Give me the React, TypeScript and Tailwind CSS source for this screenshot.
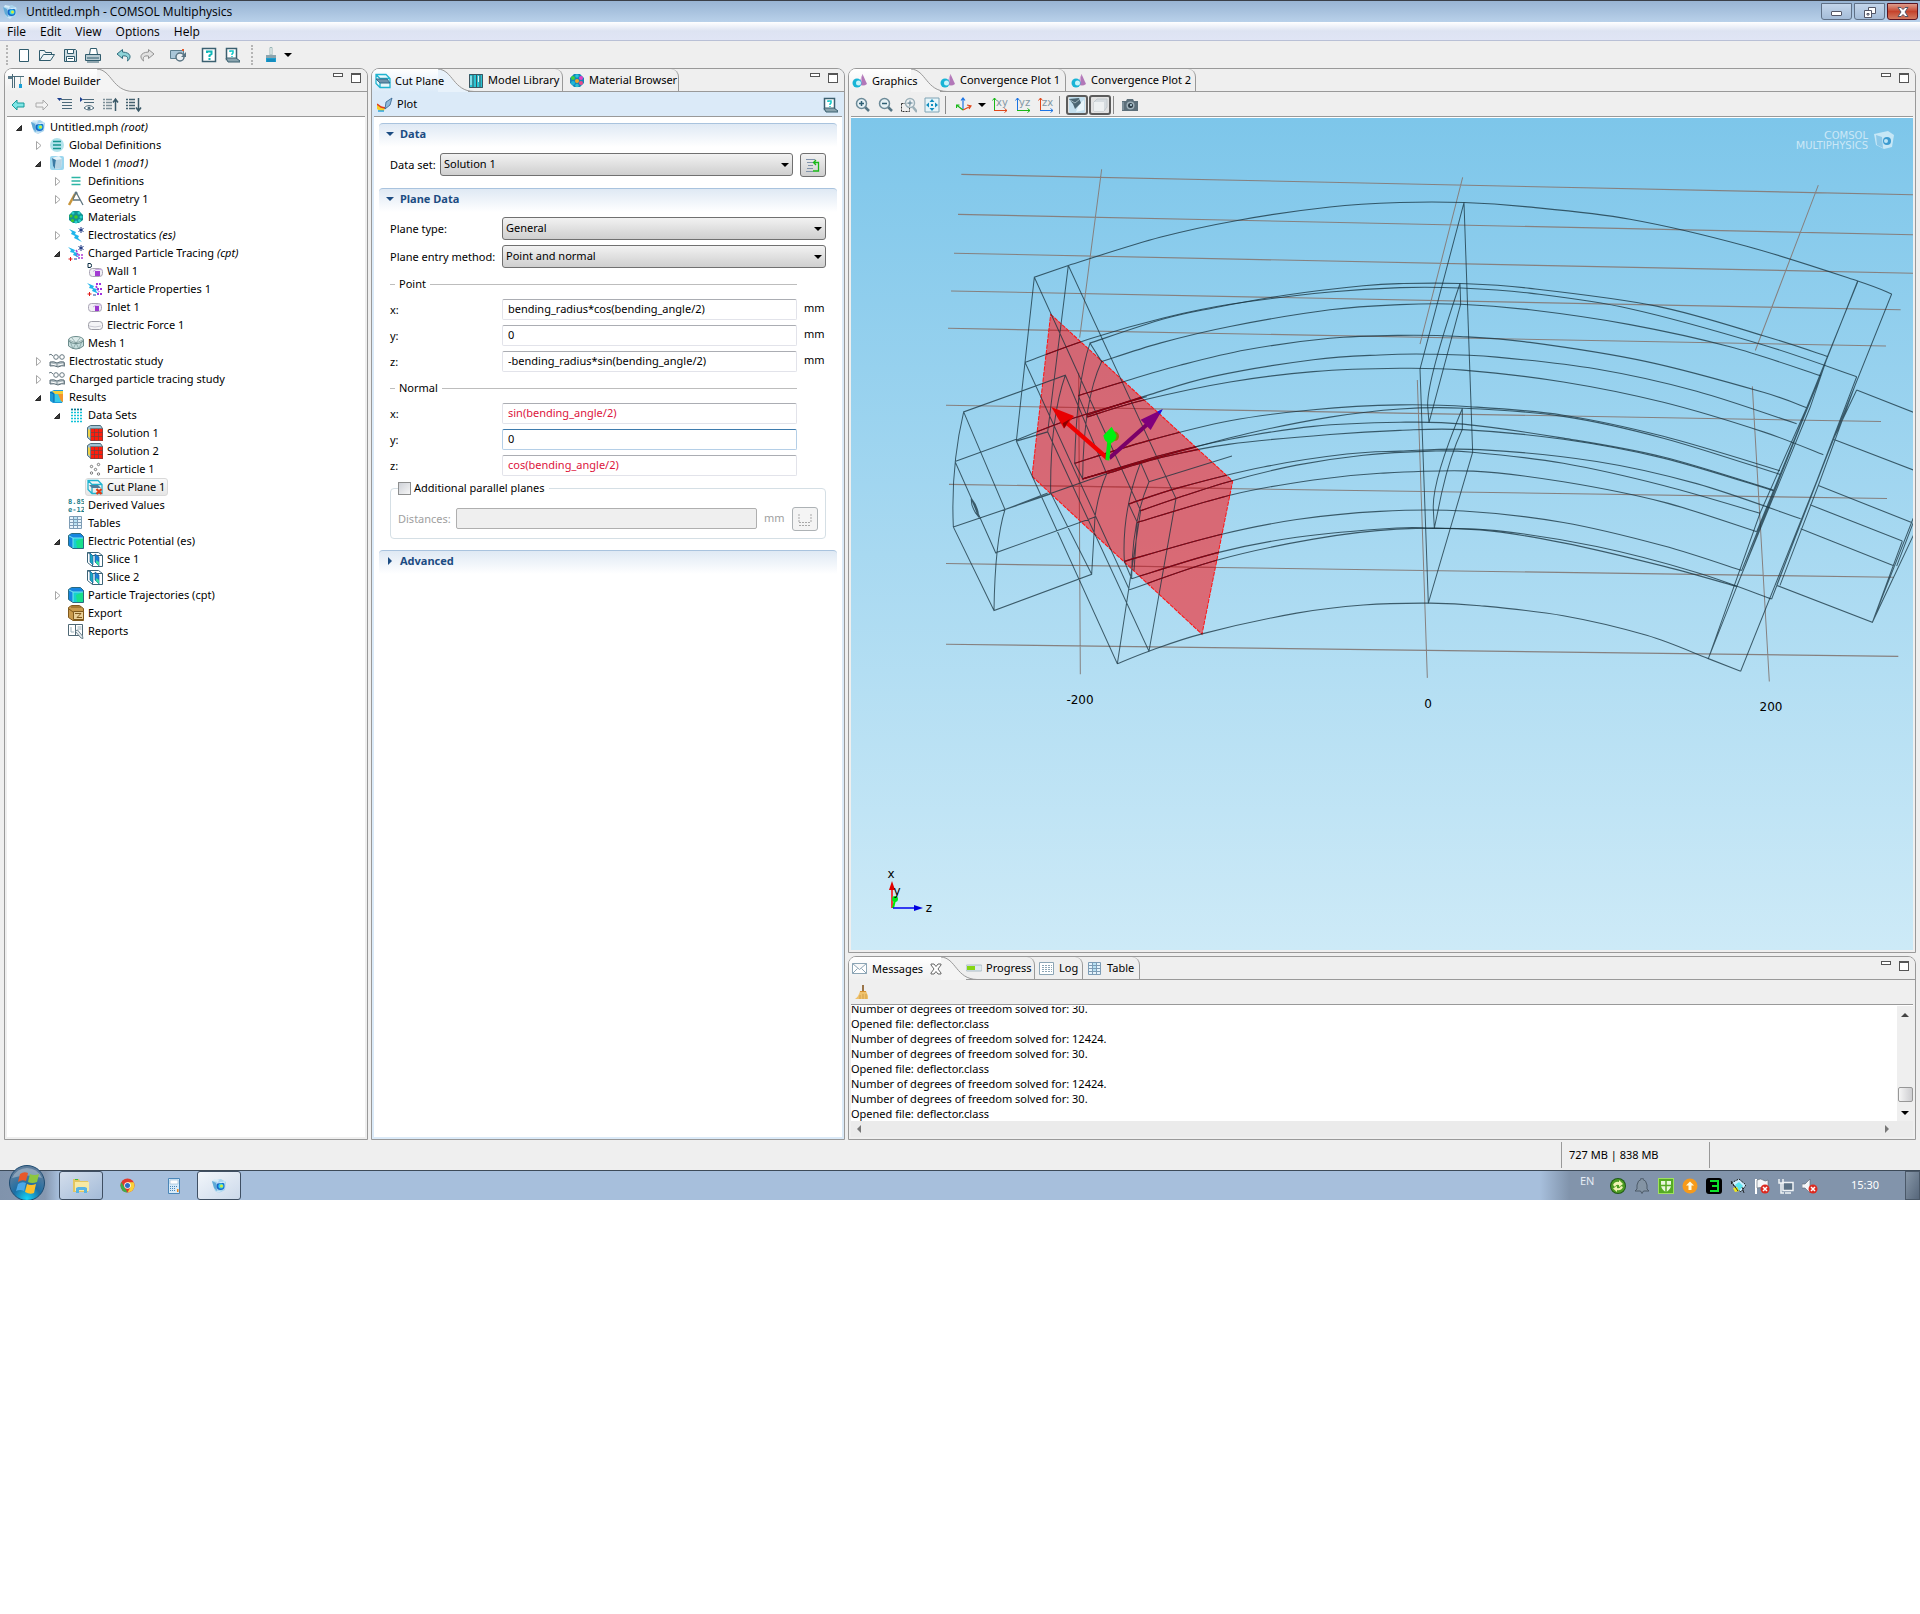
import type { ReactNode } from "react"

const UI_FONT = "font-['Noto_Sans','Open_Sans',sans-serif]"

type IconName = keyof typeof ICONS

// 16x16 icon drawings, keyed by what they stand for
const ICONS = {
    app: (
        <>
            <path d="M1 3l9-2 5 3-1 8-6 3-4-2z" fill="#a9d4ee" />
            <path d="M1 3l4 2 1 8-3-3z" fill="#5fa9d6" />
            <path d="M3 1l5 1-1 2-5-1z" fill="#d5ebf8" />
            <path d="M5 13l3 2 2-2z" fill="#cfe6f4" />
            <circle cx="9.500" cy="8" r="4" fill="#1565c8" />
            <circle cx="10" cy="8" r="2.600" fill="#35d3e8" />
            <circle cx="10.500" cy="8" r="1.500" fill="#d8ea3a" />
            <path d="M6 5l8-1" stroke="#dff3ff" />
        </>
    ),
    newFile: <path d="M3.500 2.500h9v12h-9z" fill="#fff" stroke="#2f5b6c" />,
    open: <path d="M.5 13.500V3.500h5l1 2h6v2.500m-12 5.500l4-6h11l-4 6z" fill="#eef3f5" stroke="#2f5b6c" />,
    save: (
        <>
            <path d="M2.500 2.500h11l1 1v11h-12z" fill="#cfdde2" stroke="#2f5b6c" />
            <path d="M5.500 2.500h6v4h-6zM4.500 9.500h8v5h-8z" fill="#fff" stroke="#2f5b6c" />
            <path d="M6 11.500h5" stroke="#2f5b6c" />
        </>
    ),
    print: (
        <>
            <path d="M4.500 7.500l1-6h6l1 6z" fill="#fff" stroke="#2f5b6c" />
            <path d="M.5 7.500h15v6h-15z" fill="#b9cbd2" stroke="#2f5b6c" />
            <path d="M2 11h12M2 15h12" stroke="#2f5b6c" />
        </>
    ),
    undo: <path d="M6.500 2.500L1 7l5.500 4.500V9c4-.5 6 .5 5 5 4-3 4-8.500-5-9z" fill="#8fd4d8" stroke="#2f6c7c" />,
    redo: <path d="M9.500 2.500L15 7l-5.500 4.500V9c-4-.5-6 .5-5 5-4-3-4-8.500 5-9z" fill="#e2e2e2" stroke="#929292" />,
    refresh: (
        <>
            <path d="M.5 3.500h13v8H.5z" fill="#a9c6d8" stroke="#5d7f90" />
            <circle cx="10" cy="10" r="4" fill="#e9eef1" stroke="#597483" strokeWidth="1.500" />
            <path d="M11 10h5V5z" fill="#597483" />
            <path d="M12 2h2v2h-2z" fill="#e4572a" />
        </>
    ),
    help: (
        <>
            <path d="M1.500 1.500h13v13h-13z" fill="#fff" stroke="#3b6070" strokeWidth="1.500" />
            <path d="M6 6V4.500h4.500V7L8.500 8.500V10m0 1v2" fill="none" stroke="#10b8b8" strokeWidth="2" />
        </>
    ),
    docs: (
        <>
            <path d="M2.500 1.500h10v11h-10z" fill="#fff" stroke="#3b6070" strokeWidth="1.500" />
            <path d="M2 11h10l4 3v1H4z" fill="#8aa4ae" stroke="#3b6070" />
            <path d="M6 5V4h3v2L8 7v1m0 1v1" fill="none" stroke="#10c8c8" strokeWidth="1.500" />
        </>
    ),
    brush: (
        <>
            <path d="M7 .5h2V8H7z" fill="#fff" stroke="#8aa" strokeWidth=".8" />
            <path d="M3 8h10v3H3z" fill="#8ca5ae" />
            <path d="M3 11h10v4H3z" fill="#1d9fd0" />
            <path d="M5 12v3m2-3v3m2-3v3m2-3v3" stroke="#0b6fa0" strokeWidth=".7" />
        </>
    ),
    builder: (
        <>
            <path d="M0 3.500h16M4.500 1v14M6.500 3v12" stroke="#4b6b7a" />
            <path d="M12.500 4v8" stroke="#8aa" />
            <path d="M11 11h3v4h-3z" fill="#19a0d8" />
            <path d="M0 3h4v3H0z" fill="#5a7a8a" />
        </>
    ),
    back: <path d="M1 8l5-5v3h7v4H6v3z" fill="#7fe6e6" stroke="#159a9a" />,
    forward: <path d="M14 8L9 3v3H2v4h7v3z" fill="#f2f2f2" stroke="#a9a9a9" />,
    collapse: (
        <>
            <path d="M0 1h5L2.500 4z" fill="#1b3f8f" />
            <path d="M4 2.500h11M5 5.500h10M5 8.500h10M5 11.500h10" stroke="#4d6a7a" />
        </>
    ),
    show: (
        <>
            <path d="M0 0l3 2.500L0 5z" fill="#1b3f8f" />
            <path d="M3 2.500h11M4 5.500h10" stroke="#4d6a7a" />
            <path d="M4 11q5-5 10 0q-5 4-10 0z" fill="#fff" stroke="#4d6a7a" />
            <circle cx="9" cy="11" r="1.500" fill="#4d6a7a" />
        </>
    ),
    moveUp: (
        <>
            <path d="M0 2.500h9M0 5.500h9M0 8.500h9M0 11.500h9" stroke="#7d8f98" strokeWidth="1.500" strokeDasharray="2 1 7 0" />
            <path d="M12.500 14V3M10 5.500L12.500 2 15 5.500" fill="none" stroke="#3c5a68" strokeWidth="1.500" />
        </>
    ),
    moveDown: (
        <>
            <path d="M0 2.500h9M0 5.500h9M0 8.500h9M0 11.500h9" stroke="#44606e" strokeWidth="1.500" strokeDasharray="2 1 7 0" />
            <path d="M12.500 1v12M10 10.500l2.500 3.500 2.500-3.500" fill="none" stroke="#3c5a68" strokeWidth="1.500" />
        </>
    ),
    globalDefs: (
        <>
            <circle cx="8" cy="8" r="7" fill="#b3e3ec" />
            <path d="M4 4.500h8M4 8h8M4 11.500h8" stroke="#16958f" strokeWidth="1.500" />
        </>
    ),
    model: (
        <>
            <rect x="1" y="1" width="14" height="14" rx="2" fill="#9bd6ee" />
            <path d="M3 3l7-2 3 3-1 9-6 1-2-3z" fill="#e8f4fa" />
            <path d="M3 3l4 2-1 9-2-3z" fill="#3a7ba5" />
            <path d="M7 5l6-1-1 9-6 1z" fill="#b5d3e3" />
        </>
    ),
    defs: <path d="M3.500 4.500h9M3.500 8h9M3.500 11.500h9" stroke="#2cb5a5" strokeWidth="1.500" />,
    geometry: (
        <>
            <path d="M7 3L1 14" stroke="#c8963c" strokeWidth="2.500" />
            <path d="M8 1l7 13M8 1L5 8M5 9h7" fill="none" stroke="#5f7680" strokeWidth="1.300" />
            <circle cx="8" cy="2" r="1.500" fill="#5f7680" />
        </>
    ),
    materials: (
        <>
            <path d="M5 2h6l4 4v5l-4 3H5l-4-3V6z" fill="#0f9292" />
            <g fill="#2ad0c8">
                <circle cx="5" cy="4" r="1.500" />
                <circle cx="11" cy="4" r="1.500" />
                <circle cx="13" cy="8" r="1.500" />
                <circle cx="8" cy="13" r="1.500" />
                <circle cx="11.500" cy="11.500" r="1.500" />
            </g>
            <g fill="#43c928">
                <circle cx="3" cy="7" r="1.500" />
                <circle cx="8" cy="8" r="1.800" />
                <circle cx="4.500" cy="11.500" r="1.500" />
            </g>
        </>
    ),
    electrostatics: (
        <>
            <path d="M1 2l7 3-1 2 4 2-1 2 4 4-8-4 1-2-4-2 1-2z" fill="#1fb6ec" />
            <path d="M13 0v6M10.500 1.500l5 3m0-3l-5 3" stroke="#14307e" />
        </>
    ),
    cpt: (
        <>
            <path d="M0 2l7 3-1 2 4 1-1 2 3 3-7-3 1-2-4-1 1-2z" fill="#1fb6ec" />
            <path d="M13 0v6M10.500 1.500l5 3m0-3l-5 3" stroke="#14307e" />
            <path d="M8 5q3 5 0 6m2-1h5m-5 3h5" stroke="#b13bd6" strokeWidth="1.600" fill="none" strokeDasharray="2 1" />
            <path d="M2.500 12v4M.5 14h4" stroke="#e01818" />
            <path d="M6 14h3" stroke="#1444a0" />
        </>
    ),
    wall: (
        <>
            <rect x="2.500" y="5.500" width="13" height="8" rx="3" fill="#f0eef4" stroke="#a9a4b4" />
            <path d="M8 8h5v5H8z" fill="#a23bd2" />
            <path d="M6 8.500l3-2h6" stroke="#c9a8e4" fill="none" />
            <path d="M1 .5h2q1.500 0 1.500 2t-1.500 2H1z" fill="none" stroke="#0c2f44" />
        </>
    ),
    particleProps: (
        <>
            <path d="M0 2l7 3-1 2 4 1-1 2 3 3-7-3 1-2-4-1 1-2z" fill="#1fb6ec" />
            <path d="M9 3h5m-5 2l3 6m-2-3h5m-5 5h5" stroke="#a133e0" strokeWidth="1.800" fill="none" strokeDasharray="2 1" />
            <path d="M2.500 11v4M.5 13h4" stroke="#e01818" />
            <path d="M6 14h3" stroke="#1444a0" />
        </>
    ),
    inlet: (
        <>
            <rect x="1.500" y="4.500" width="13" height="8" rx="3" fill="#f0eef4" stroke="#a9a4b4" />
            <path d="M8 7h4v5H8z" fill="#9a35cf" />
            <path d="M6 8l3-2h5" stroke="#c9a8e4" fill="none" />
        </>
    ),
    force: (
        <>
            <rect x="1.500" y="4.500" width="14" height="8" rx="3" fill="#f4f4f6" stroke="#9d9da6" />
            <path d="M2 9q6 2 12 0" stroke="#c9c9d2" fill="none" />
        </>
    ),
    mesh: (
        <>
            <path d="M.5 5v6q7.500 6 15 0V5z" fill="#c5dddd" stroke="#6c8c8c" />
            <ellipse cx="8" cy="5" rx="7.500" ry="3.500" fill="#dcebea" stroke="#6c8c8c" />
            <path d="M2 6l3 8 3-6 3 6 3-8M1 5l7 3 7-3M4 3l4 5 4-5" fill="none" stroke="#6c8c8c" strokeWidth=".6" />
        </>
    ),
    study: (
        <>
            <path d="M0 2q2-2 4 1" fill="none" stroke="#66777f" />
            <circle cx="7" cy="4" r="2.300" fill="#fff" stroke="#66777f" />
            <circle cx="13" cy="4" r="2.300" fill="#fff" stroke="#66777f" />
            <path d="M1 9q4-1 7 1 3-2 7-1l1 4q-3-1-7 1-4-2-8-1z" fill="#aab7bc" stroke="#5e6f78" />
            <path d="M2 11l5 1m2 0l5-1" stroke="#fff" />
        </>
    ),
    results: (
        <>
            <path d="M1 3l4-2h9v11l-1 2H4l-3-2z" fill="#1c9ad8" />
            <path d="M5 5h9v8H5z" fill="#38c9e8" />
            <path d="M9 5h5v8l-2-1z" fill="#f3952a" />
            <path d="M3 2h11v3H6z" fill="#f2cf3c" />
            <path d="M1 3l4 2v8" stroke="#0f62a8" fill="none" />
        </>
    ),
    dataSets: (
        <>
            <path d="M3 2.500h11M3 5.500h11M3 8.500h11M3 11.500h11M3 14.500h11" stroke="#12c3d8" strokeWidth="1.500" strokeDasharray="2 1" />
            <path d="M3 2.500h11" stroke="#13768e" strokeWidth="1.500" strokeDasharray="2 1" />
        </>
    ),
    solution: (
        <>
            <path d="M.5 2.500l3-2h10l2 3v12H4l-3.500-3z" fill="#9fc4d4" stroke="#4b6b7a" />
            <path d="M1 4l2 1v8l-2-2z" fill="#f0d248" />
            <path d="M4 4h12v12H4z" fill="#ff1c0c" />
            <path d="M3.500 3.500h12v12h-12zM7.500 4v12M11.500 4v12M4 7.500h12M4 11.500h12" stroke="#5a4a48" strokeWidth=".6" fill="none" />
        </>
    ),
    particle: (
        <g fill="none" stroke="#777">
            <circle cx="4.500" cy="5.500" r="1.200" />
            <circle cx="11.500" cy="3.500" r="1.200" />
            <circle cx="8.500" cy="8.500" r="1.200" />
            <circle cx="4.500" cy="12" r="1.200" />
            <circle cx="11.500" cy="13" r="1.200" />
        </g>
    ),
    cutPlaneBad: (
        <>
            <path d="M1 1.500h10l4 4v9H5l-4-4zM1 1.500l4 4h10M5 5.500v9" fill="none" stroke="#20b4d0" strokeWidth="1.300" />
            <path d="M2 6h9l3 3H5z" fill="#4b7f9e" />
            <path d="M9.500 10l5 5m0-5l-5 5" stroke="#e43a12" strokeWidth="2.200" />
        </>
    ),
    cutPlane: (
        <>
            <path d="M1 1.500h10l4 4v9H5l-4-4zM1 1.500l4 4h10M5 5.500v9" fill="#e5f7fb" stroke="#20b4d0" strokeWidth="1.300" />
            <path d="M1 6h11l3 4H5z" fill="#6f93ab" stroke="#2f6c8c" />
        </>
    ),
    derived: (
        <g fontFamily="DejaVu Sans Mono, monospace" fontSize="7" fontWeight="bold" fill="#1c808c">
            <text x="0" y="7">8.85</text>
            <text x="0" y="15">e-12</text>
        </g>
    ),
    tables: (
        <>
            <path d="M1.500 1.500h12v12h-12z" fill="#e6f3fb" stroke="#7d9cb5" />
            <path d="M6 2h4v8H6z" fill="#b8e2f4" />
            <path d="M1.500 4.500h12M1.500 7.500h12M1.500 10.500h12M5.500 1.500v12M9.500 1.500v12" stroke="#7d9cb5" />
        </>
    ),
    plotGroup: (
        <>
            <path d="M.5 2.500l3-2h9l3 3v12H5l-4.500-3z" fill="#1686e0" stroke="#2a6a80" />
            <path d="M5 5h10v10H5z" fill="#19d0d0" />
            <path d="M8 8l7-3v10H9z" fill="#18e08c" />
            <path d="M1 3l4 2h10M5 5v10" fill="none" stroke="#75e6f0" />
        </>
    ),
    slice: (
        <>
            <path d="M.5 1.500h11l4 3v11h-10l-5-4zM.5 1.500l5 3h10M5.500 4.500v11" fill="#fff" stroke="#3c6478" />
            <path d="M3 2l3 3v9l-3-3z" fill="#1aa8c4" stroke="#17669c" strokeWidth=".7" />
            <path d="M8 3l4 3v9l-4-4z" fill="#1a7fd8" stroke="#17669c" strokeWidth=".7" />
            <path d="M9 9l3 2v4l-3-3z" fill="#35e0a0" />
        </>
    ),
    exporter: (
        <>
            <path d="M.5 2.500l3-2h8l4 3v12H5l-4.500-3z" fill="#c99a4c" stroke="#80591c" />
            <path d="M5.500 6.500h10v8h-10z" fill="#e9cf98" stroke="#80591c" />
            <path d="M7 8.500h6l-4 4h5M1 4l4 3M3 2h10" fill="none" stroke="#80591c" />
        </>
    ),
    reports: (
        <>
            <path d="M.5 1.500h14v11H.5z" fill="#fff" stroke="#4f6875" />
            <path d="M7.500 1v12" stroke="#4f6875" />
            <path d="M9.500 4h4M9.500 6h4M3 4v5h3" stroke="#9bb0ba" fill="none" />
            <path d="M7 8l6 7 2 .5-.5-2.500-5-6z" fill="#e8eef1" stroke="#4f6875" strokeWidth=".8" />
        </>
    ),
    library: (
        <>
            <path d="M1 1h14v14H1z" fill="#2ac5d4" />
            <path d="M1.500 1.500h13v13h-13zM5 1v14M8.500 1v14M12 1v14" fill="none" stroke="#3c5560" />
            <path d="M3 3v9M10.500 3v6" stroke="#d8f7fa" />
        </>
    ),
    browser: (
        <>
            <path d="M5 1h6l4 4v5l-4 4H5l-4-4V5z" fill="#1586b8" />
            <circle cx="4" cy="5" r="2" fill="#3fd03a" />
            <circle cx="8" cy="3" r="1.800" fill="#22c7d8" />
            <circle cx="12" cy="5" r="2" fill="#e33fc4" />
            <circle cx="8" cy="8" r="2" fill="#f2a628" />
            <circle cx="4" cy="10" r="2" fill="#1fb8d8" />
            <circle cx="12" cy="10" r="2" fill="#e84c8a" />
            <circle cx="8" cy="12.500" r="1.800" fill="#2fc0d0" />
        </>
    ),
    plot: (
        <>
            <path d="M0 7l4 3 4 1-1 3H3l-3-2z" fill="#f6d02c" />
            <path d="M0 7l4 3 4 1" stroke="#e23d1c" strokeWidth="1.500" fill="none" />
            <path d="M1 14h6" stroke="#2aa6e0" strokeWidth="1.500" />
            <path d="M8 12l1-7 6-4-2 7z" fill="#8fbadb" stroke="#2f5f8c" strokeWidth=".8" />
        </>
    ),
    select: (
        <>
            <path d="M1 2.500h9M2 5.500h6M3 8.500h5M2 11.500h6M1 14.500h7" stroke="#8093ab" />
            <path d="M9 5.500h4.500v8.500H8M11 3L8.500 5.500 11 8" fill="none" stroke="#18b818" strokeWidth="1.300" />
        </>
    ),
    range: <path d="M2 3v9m12-9v9M2 11.500h12M2 14.500h12" stroke="#a9a9a9" strokeDasharray="2 1" fill="none" />,
    graphics: (
        <>
            <path d="M10.500 1l4.500 10q-4 3-8 0z" fill="#b277b8" />
            <path d="M10.500 1L9 12l-1.500-1z" fill="#dcb8e0" />
            <circle cx="5" cy="10" r="4.500" fill="#18b4d6" />
            <circle cx="6.500" cy="10" r="2.500" fill="#c8f3fa" />
        </>
    ),
    zoomIn: (
        <>
            <path d="M10 10l4 4" stroke="#557584" strokeWidth="2.500" />
            <circle cx="6.500" cy="6.500" r="5" fill="#e6f1f5" stroke="#6d8b99" strokeWidth="1.500" />
            <path d="M4 6.500h5M6.500 4v5" stroke="#2f5f74" strokeWidth="1.500" />
        </>
    ),
    zoomOut: (
        <>
            <path d="M10 10l4 4" stroke="#557584" strokeWidth="2.500" />
            <circle cx="6.500" cy="6.500" r="5" fill="#e6f1f5" stroke="#6d8b99" strokeWidth="1.500" />
            <path d="M4 6.500h5" stroke="#2f5f74" strokeWidth="1.500" />
        </>
    ),
    zoomBox: (
        <>
            <path d="M.5 6.500h8v8h-8z" fill="none" stroke="#333" strokeDasharray="2 1" />
            <path d="M12 10l4 5" stroke="#9db0b8" strokeWidth="2.500" />
            <circle cx="9" cy="6" r="4.500" fill="#eef4f6" fillOpacity=".7" stroke="#9db0b8" strokeWidth="1.500" />
            <path d="M6.500 6h5M9 3.500v5" stroke="#5d7f90" />
        </>
    ),
    extents: (
        <>
            <path d="M1 1h14v14H1z" fill="#e6f5fa" stroke="#7fa3b4" />
            <path d="M8 2l2.500 3h-5zM8 14l2.500-3h-5zM2 8l3-2.500v5zM14 8l-3-2.500v5zM7 7h2v2H7z" fill="#128fc0" />
        </>
    ),
    axes: (
        <>
            <path d="M7 13V1M5 3.500L7 1l2 2.500" stroke="#1b74e4" strokeWidth="1.200" fill="none" />
            <path d="M7 13L.5 8m0 3V8h3" stroke="#18b818" strokeWidth="1.200" fill="none" />
            <path d="M7 13l8-4m-4-1l4 1-2 3" stroke="#e0481c" strokeWidth="1.200" fill="none" />
        </>
    ),
    envelope: <path d="M.5 2.500h14v10H.5zM.5 2.500l7 6 7-6M.5 12.500l5-5m9 5l-5-5" fill="#fff" stroke="#8ca5b5" />,
    progress: (
        <>
            <rect x="0" y="4" width="16" height="6" rx="1" fill="#dfe9ee" stroke="#9fb3bd" strokeWidth=".8" />
            <path d="M1 5h8v4H1z" fill="#86d614" />
        </>
    ),
    log: (
        <>
            <path d="M.5 1.500h14v12H.5z" fill="#fff" stroke="#8ca5b5" />
            <path d="M3 4.500h10M3 6.500h10M3 8.500h10M3 10.500h10" stroke="#8ca5b5" strokeDasharray="2 1" />
        </>
    ),
    broom: (
        <>
            <path d="M7 0h2v6H7z" fill="#9a7448" />
            <path d="M5 6h6l2 5v3H0q4-3 5-8z" fill="#efc26c" />
            <path d="M5 10v4m3-5v5m3-5v5" stroke="#c98f38" strokeWidth=".7" />
            <path d="M5 6.500h6" stroke="#d8912f" />
        </>
    ),
    camera: (
        <>
            <path d="M0 4h4l1-2h6l1 2h4v10H0z" fill="#5c6f7a" />
            <circle cx="8.500" cy="8.500" r="4" fill="#9fb0b9" />
            <circle cx="8.500" cy="8.500" r="2.500" fill="#2f3f49" />
            <circle cx="9" cy="8" r="1" fill="#bfe0ee" />
            <path d="M1 5v8" stroke="#9fb0b9" />
        </>
    ),
    light: (
        <>
            <rect width="16" height="16" rx="1" fill="#c3dfee" />
            <path d="M10 7l5-4v10l-8 2z" fill="#e8f5fb" />
            <path d="M0 2l10-1 2 5-6 6-2-5z" fill="#4b6673" />
            <path d="M1 3l5 3 5-4" stroke="#9fb6c0" fill="none" />
        </>
    ),
    transparency: (
        <>
            <path d="M2 5l3-3h10v8l-3 4H2z" fill="#d5dbdf" stroke="#c2c9cd" />
            <path d="M2 5h10v9H2z" fill="#edf0f1" />
        </>
    ),
    explorer: (
        <>
            <path d="M0 1h6l1 2h8v11H0z" fill="#e3c661" />
            <path d="M2 4h14v9H2z" fill="#f7e9a4" />
            <path d="M3 15v-5l2-1h7l2 1v5h-3v-3H6v3z" fill="#58b4e4" />
            <path d="M2 1.500h3" stroke="#3fb83f" />
        </>
    ),
    chrome: (
        <>
            <circle cx="8" cy="8" r="7.500" fill="#e0392c" />
            <path d="M1.500 4.500L6 12l2 3.500Q1 15 .5 8 .6 6 1.500 4.500z" fill="#3fae49" />
            <path d="M8 4.500h6.600Q17 11 12 14.300L8 15.500 11 10z" fill="#f8d13a" />
            <circle cx="8" cy="8" r="3.500" fill="#fff" />
            <circle cx="8" cy="8" r="2.700" fill="#2f6fc4" />
        </>
    ),
    calculator: (
        <>
            <path d="M2.500.5h11v15h-11z" fill="#d8ebf9" stroke="#4a86b8" />
            <path d="M4 2h8v4H4z" fill="#fff" stroke="#8fb4d2" strokeWidth=".6" />
            <path d="M4 8.500h8M4 10.500h6M4 12.500h6" stroke="#4a86b8" strokeDasharray="1 1" />
            <path d="M11 11h1.500v3H11z" fill="#f08a1c" />
        </>
    ),
    sync: (
        <>
            <circle cx="8" cy="8" r="8" fill="#1f5a14" />
            <circle cx="8" cy="8" r="7" fill="#4c9c22" />
            <path d="M3 7q2-4 6-3V2l4 4-4 3V7Q6 6 5 9zM13 9q-2 4-6 3v2L3 10.500 7 8v2q3 1 4-2z" fill="#f2f2b4" />
        </>
    ),
    bell: <path d="M1 13l2-2V7q1-5 4-5.500V0h2v1.500Q12 2 13 7v4l2 2H9.500L8 15.500 6.500 13z" fill="#8494a4" stroke="#4d5a68" />,
    shield: (
        <>
            <rect x=".5" y=".5" width="15" height="15" fill="#55ab24" stroke="#9fe060" />
            <path d="M3 3h10v5q-1 4-5 6-4-2-5-6z" fill="#e8f6dc" />
            <path d="M8 3v11M3 7.500h10" stroke="#55ab24" strokeWidth="1.500" />
        </>
    ),
    update: (
        <>
            <circle cx="8" cy="8" r="7.500" fill="#f79a1a" />
            <path d="M8 3.500l4 4H9.500V12h-3V7.500H4z" fill="#fffbe0" />
        </>
    ),
    three: (
        <>
            <rect width="16" height="16" rx="3" fill="#000" />
            <path d="M4 3h8v10H4M6 8h6" fill="none" stroke="#0de32a" strokeWidth="2" />
        </>
    ),
    tray: (
        <>
            <path d="M1 5l8-4 7 6-5 7z" fill="#cfefff" stroke="#111" strokeDasharray="2 1" />
            <path d="M5 7l4-3 4 4-4 5z" fill="#5ce6f0" />
            <path d="M3 10l4-1 2 4-4 1z" fill="#f2e91c" />
            <path d="M1 3l7 10M12 9l2 6" stroke="#111" strokeWidth=".8" />
        </>
    ),
    flag: (
        <>
            <path d="M2 1v15" stroke="#fff" strokeWidth="2" />
            <path d="M3 2q4-2 6 0t5 0v8q-3 1-5 0t-6 0z" fill="#f4f6f8" stroke="#58636e" strokeWidth=".6" />
            <circle cx="11" cy="11" r="4.500" fill="#dc2a20" />
            <path d="M9 9l4 4m0-4l-4 4" stroke="#fff" strokeWidth="1.500" />
        </>
    ),
    network: (
        <>
            <path d="M5 4.500h10v8H5z" fill="#5c7286" stroke="#f0f3f6" strokeWidth="1.500" />
            <path d="M7 15h6M1 1v4h4V1M3 5v10h3" stroke="#f0f3f6" strokeWidth="1.500" fill="none" />
        </>
    ),
    volume: (
        <>
            <path d="M0 6h3l5-5v14l-5-5H0z" fill="#f4f6f8" stroke="#58636e" strokeWidth=".6" />
            <circle cx="11" cy="11" r="4.500" fill="#dc2a20" />
            <path d="M9 9l4 4m0-4l-4 4" stroke="#fff" strokeWidth="1.500" />
        </>
    ),
}

function Icon({ name, className = "size-4" }: { name: IconName; className?: string }) {
    return (
        <svg viewBox="0 0 16 16" className={`shrink-0 ${className}`} aria-hidden="true">
            {ICONS[name]}
        </svg>
    )
}

function PlaneIcon({ label, up, right }: { label: string; up: string; right: string }) {
    return (
        <svg viewBox="0 0 16 16" className="size-4 shrink-0" aria-hidden="true">
            <path d="M2.500 14V1M.5 3.500L2.500 1l2 2.500" stroke={up} fill="none" />
            <path d="M2 13.500h13M12.500 11.500l2.500 2-2.500 2" stroke={right} fill="none" />
            <text x="4" y="9" fontSize="10" fontFamily="DejaVu Sans, sans-serif" fill="#8298a4">{label}</text>
        </svg>
    )
}

function Caret({ className = "" }: { className?: string }) {
    return (
        <svg viewBox="0 0 8 4" className={`h-1 w-2 shrink-0 ${className}`} aria-hidden="true">
            <path d="M0 0h8L4 4z" fill="#000" />
        </svg>
    )
}

function ToolButton({ label, children, className = "w-[23px]" }: { label: string; children: ReactNode; className?: string }) {
    return (
        <button type="button" aria-label={label} className={`flex h-5 shrink-0 items-center justify-center ${className}`}>
            {children}
        </button>
    )
}

interface TabInfo {
    label: string
    icon: IconName
    width: string
    closable?: boolean
}

interface PanelProps {
    tabs: TabInfo[]
    toolbar: ReactNode
    children: ReactNode
    className?: string
    active?: boolean
}

// One docked view: tab strip, toolbar line and content
function Panel({ tabs, toolbar, children, className = "", active = false }: PanelProps) {
    const [first, ...others] = tabs
    const tone = active ? "bg-[#dbeaf8]" : "bg-[#efefef]"
    const toFill = active ? "to-[#dbeaf8]" : "to-[#efefef]"

    return (
        <section className={`flex flex-col overflow-hidden rounded-t-lg border border-[#999] ${tone} ${className}`}>
            <div className="flex h-[23px] shrink-0 bg-[#efefef]">
                <button type="button" className={`relative z-10 flex items-center bg-linear-to-b from-white ${toFill} pt-px pl-[3px] ${first.width}`}>
                    <Icon name={first.icon} />
                    <span className="pl-1 whitespace-nowrap">{first.label}</span>
                    {first.closable && (
                        <svg viewBox="0 0 12 12" className="ml-[7px] size-3 shrink-0" aria-hidden="true">
                            <path d="M1 1h3l2 2.500L8 1h3v1L8 6l3 4v1H8L6 8.500 4 11H1v-1l3-4-3-4z" fill="#fff" stroke="#666" />
                        </svg>
                    )}
                </button>
                <svg viewBox="0 0 36 23" className="h-[23px] w-9 shrink-0" aria-hidden="true">
                    <path d="M0 0C14 1 14 22 36 22.500V23H0z" fill={active ? "#e8f2fb" : "#f4f4f4"} />
                    <path d="M0 0C15 1 15 22 36 22.500" fill="none" stroke="#999" />
                </svg>
                {others.map((tab) => (
                    <button
                        key={tab.label}
                        type="button"
                        className={`flex items-center rounded-tr-lg border-r border-b border-r-[#999] border-b-[#999] pt-px ${tab.width}`}
                    >
                        <Icon name={tab.icon} />
                        <span className="pl-1 whitespace-nowrap">{tab.label}</span>
                    </button>
                ))}
                <div className="flex flex-1 justify-end gap-2 border-b border-[#999] pt-1 pr-[6px]">
                    <button type="button" aria-label="Minimize" className="h-1 w-[10px] border border-[#555] bg-white" />
                    <button type="button" aria-label="Maximize" className="h-[10px] w-[10px] border border-t-2 border-[#555] bg-white" />
                </div>
            </div>
            <div className="mx-[2px] flex h-[25px] shrink-0 items-center border-b border-[#999] pt-px">{toolbar}</div>
            <div className="mx-[2px] mb-[2px] flex min-h-0 flex-1 flex-col bg-white pt-px">{children}</div>
        </section>
    )
}

interface TreeNode {
    level: 0 | 1 | 2 | 3
    icon: IconName
    label: string
    tag?: string
    open?: boolean
    selected?: boolean
}

const INDENT = ["pl-1", "pl-[23px]", "pl-[42px]", "pl-[61px]"]

const TREE: TreeNode[] = [
    { level: 0, icon: "app", label: "Untitled.mph", tag: "(root)", open: true },
    { level: 1, icon: "globalDefs", label: "Global Definitions", open: false },
    { level: 1, icon: "model", label: "Model 1", tag: "(mod1)", open: true },
    { level: 2, icon: "defs", label: "Definitions", open: false },
    { level: 2, icon: "geometry", label: "Geometry 1", open: false },
    { level: 2, icon: "materials", label: "Materials" },
    { level: 2, icon: "electrostatics", label: "Electrostatics", tag: "(es)", open: false },
    { level: 2, icon: "cpt", label: "Charged Particle Tracing", tag: "(cpt)", open: true },
    { level: 3, icon: "wall", label: "Wall 1" },
    { level: 3, icon: "particleProps", label: "Particle Properties 1" },
    { level: 3, icon: "inlet", label: "Inlet 1" },
    { level: 3, icon: "force", label: "Electric Force 1" },
    { level: 2, icon: "mesh", label: "Mesh 1" },
    { level: 1, icon: "study", label: "Electrostatic study", open: false },
    { level: 1, icon: "study", label: "Charged particle tracing study", open: false },
    { level: 1, icon: "results", label: "Results", open: true },
    { level: 2, icon: "dataSets", label: "Data Sets", open: true },
    { level: 3, icon: "solution", label: "Solution 1" },
    { level: 3, icon: "solution", label: "Solution 2" },
    { level: 3, icon: "particle", label: "Particle 1" },
    { level: 3, icon: "cutPlaneBad", label: "Cut Plane 1", selected: true },
    { level: 2, icon: "derived", label: "Derived Values" },
    { level: 2, icon: "tables", label: "Tables" },
    { level: 2, icon: "plotGroup", label: "Electric Potential (es)", open: true },
    { level: 3, icon: "slice", label: "Slice 1" },
    { level: 3, icon: "slice", label: "Slice 2" },
    { level: 2, icon: "plotGroup", label: "Particle Trajectories (cpt)", open: false },
    { level: 2, icon: "exporter", label: "Export" },
    { level: 2, icon: "reports", label: "Reports" },
]

function TreeRow({ node }: { node: TreeNode }) {
    return (
        <li className={`flex h-[18px] items-center ${INDENT[node.level]}`}>
            <svg viewBox="0 0 16 16" className="mr-[1px] size-4 shrink-0" aria-hidden="true">
                {node.open === true && <path d="M5.500 11.500h5v-5z" fill="#404040" stroke="#262626" />}
                {node.open === false && <path d="M6.500 4.500v8l4.500-4z" fill="#fff" stroke="#a6a6a6" />}
            </svg>
            <span
                className={`flex h-[18px] items-center gap-1 rounded-[3px] border pr-[2px] pl-px ${
                    node.selected ? "border-[#d9d9d9] bg-linear-to-b from-[#fafafa] to-[#e6e6e6]" : "border-transparent"
                }`}
            >
                <Icon name={node.icon} />
                <span className="whitespace-nowrap">
                    {node.label}
                    {node.tag && <i> {node.tag}</i>}
                </span>
            </span>
        </li>
    )
}

function ModelBuilder() {
    const tools: IconName[] = ["back", "forward", "collapse", "show", "moveUp", "moveDown"]
    return (
        <Panel
            className="w-[364px] shrink-0"
            tabs={[{ label: "Model Builder", icon: "builder", width: "w-[92px]" }]}
            toolbar={tools.map((name) => (
                <ToolButton key={name} label={name}>
                    <Icon name={name} />
                </ToolButton>
            ))}
        >
            <ul>
                {TREE.map((node, index) => (
                    <TreeRow key={index} node={node} />
                ))}
            </ul>
        </Panel>
    )
}

function SectionHeader({ title, collapsed = false, className = "" }: { title: string; collapsed?: boolean; className?: string }) {
    return (
        <h2 className={className}>
            <button
                type="button"
                className="flex h-6 w-full items-center gap-[6px] rounded-t border-t border-[#a9c3de] bg-linear-to-b from-[#dfe9f4] to-white pb-[3px] pl-[7px] font-bold text-[#1c4c82]"
            >
                <svg viewBox="0 0 8 8" className="size-2" aria-hidden="true">
                    <path d={collapsed ? "M2 0l4 4-4 4z" : "M0 2h8L4 6z"} fill="#1c4c82" />
                </svg>
                {title}
            </button>
        </h2>
    )
}

function SelectBox({ id, value }: { id: string; value: string }) {
    return (
        <div className="relative flex h-[23px] flex-1">
            <select
                id={id}
                className="w-full appearance-none rounded-[3px] border border-[#707070] bg-linear-to-b from-[#f2f2f2] to-[#cfcfcf] pl-[3px] text-black"
            >
                <option>{value}</option>
            </select>
            <Caret className="pointer-events-none absolute top-[10px] right-1" />
        </div>
    )
}

interface ExprFieldProps {
    id: string
    label: string
    value: string
    unit?: string
    invalid?: boolean
    focused?: boolean
}

function ExprField({ id, label, value, unit, invalid = false, focused = false }: ExprFieldProps) {
    const border = focused ? "border-[#b5cfe7] border-t-[#3d7bad]" : "border-[#e2e3ea] border-t-[#abadb3]"
    return (
        <div className="flex h-[21px]">
            <label htmlFor={id} className="w-28 leading-[21px]">{label}</label>
            <input
                id={id}
                type="text"
                defaultValue={value}
                className={`min-w-0 flex-1 rounded-[2px] border bg-white pl-[5px] ${border} ${invalid ? "text-[#dc143c]" : "text-black"}`}
            />
            <span className="w-[29px] pl-[7px] leading-[18px]">{unit}</span>
        </div>
    )
}

function Group({ title, children }: { title: string; children: ReactNode }) {
    return (
        <div role="group" aria-label={title} className="flex flex-col gap-[5px] pt-2">
            <div className="mr-[29px] mb-[2px] flex h-4 items-center gap-1">
                <span className="h-px w-[5px] bg-[#bdbdbd]" />
                {title}
                <span className="h-px flex-1 bg-[#bdbdbd]" />
            </div>
            {children}
        </div>
    )
}

function CutPlaneSettings() {
    return (
        <Panel
            active
            className="w-[474px] shrink-0"
            tabs={[
                { label: "Cut Plane", icon: "cutPlane", width: "w-[66px]" },
                { label: "Model Library", icon: "library", width: "-ml-[6px] w-[95px]" },
                { label: "Material Browser", icon: "browser", width: "w-[116px] pl-[6px]" },
            ]}
            toolbar={
                <>
                    <button type="button" className="flex items-center gap-1 pl-[3px]">
                        <Icon name="plot" />
                        Plot
                    </button>
                    <ToolButton label="Help" className="ml-auto w-6">
                        <Icon name="docs" />
                    </ToolButton>
                </>
            }
        >
            <div className="px-[5px] pt-[5px]">
                <SectionHeader title="Data" />
                <div className="flex px-[11px] pt-[6px]">
                    <label htmlFor="data-set" className="w-[50px] leading-[23px] whitespace-nowrap">Data set:</label>
                    <SelectBox id="data-set" value="Solution 1" />
                    <button
                        type="button"
                        aria-label="Go to source"
                        className="ml-[7px] flex h-6 w-[26px] items-center justify-center rounded-[3px] border border-[#707070] bg-linear-to-b from-[#f2f2f2] to-[#cfcfcf]"
                    >
                        <Icon name="select" />
                    </button>
                </div>

                <SectionHeader title="Plane Data" className="mt-[11px]" />
                <div className="px-[11px] pt-[5px]">
                    <div className="flex">
                        <label htmlFor="plane-type" className="w-28 leading-[23px]">Plane type:</label>
                        <SelectBox id="plane-type" value="General" />
                    </div>
                    <div className="mt-[5px] flex">
                        <label htmlFor="entry-method" className="w-28 leading-[23px] whitespace-nowrap">Plane entry method:</label>
                        <SelectBox id="entry-method" value="Point and normal" />
                    </div>

                    <Group title="Point">
                        <ExprField id="point-x" label="x:" value="bending_radius*cos(bending_angle/2)" unit="mm" />
                        <ExprField id="point-y" label="y:" value="0" unit="mm" />
                        <ExprField id="point-z" label="z:" value="-bending_radius*sin(bending_angle/2)" unit="mm" />
                    </Group>
                    <Group title="Normal">
                        <ExprField id="normal-x" label="x:" value="sin(bending_angle/2)" invalid />
                        <ExprField id="normal-y" label="y:" value="0" focused />
                        <ExprField id="normal-z" label="z:" value="cos(bending_angle/2)" invalid />
                    </Group>

                    <fieldset className="mt-1 rounded border border-[#d5dfe5] px-[7px] pb-[7px]">
                        <legend>
                            <label className="flex h-4 items-center gap-[3px] pr-1">
                                <input
                                    type="checkbox"
                                    className="size-[13px] appearance-none border border-[#8e8f8f] bg-linear-to-br from-[#cfd2d8] to-[#f6f6f6]"
                                />
                                Additional parallel planes
                            </label>
                        </legend>
                        <div className="mt-[11px] flex h-6 text-[#a0a0a0]">
                            <label htmlFor="distances" className="w-[58px] leading-[23px]">Distances:</label>
                            <input
                                id="distances"
                                type="text"
                                disabled
                                className="mt-px h-[21px] min-w-0 flex-1 rounded-[2px] border border-[#afafaf] bg-[#efefef]"
                            />
                            <span className="w-[35px] pl-[7px] leading-[21px]">mm</span>
                            <button
                                type="button"
                                disabled
                                aria-label="Range"
                                className="flex h-6 w-[26px] items-center justify-center rounded-[3px] border border-[#adb2b5] bg-[#f4f4f4]"
                            >
                                <Icon name="range" />
                            </button>
                        </div>
                    </fieldset>
                </div>

                <SectionHeader title="Advanced" collapsed className="mt-[11px]" />
            </div>
        </Panel>
    )
}

type Point = [number, number]

// Catmull-Rom spline through the given points
function smooth(points: Point[]) {
    let d = `M${points[0][0]} ${points[0][1]}`
    for (let i = 0; i < points.length - 1; i++) {
        const p0 = points[i - 1] ?? points[i]
        const p1 = points[i]
        const p2 = points[i + 1]
        const p3 = points[i + 2] ?? p2
        const c1x = p1[0] + (p2[0] - p0[0]) / 6
        const c1y = p1[1] + (p2[1] - p0[1]) / 6
        const c2x = p2[0] - (p3[0] - p1[0]) / 6
        const c2y = p2[1] - (p3[1] - p1[1]) / 6
        d += `C${c1x} ${c1y} ${c2x} ${c2y} ${p2[0]} ${p2[1]}`
    }
    return d
}

const ARCS: Point[][] = [
    [[415, 285], [690, 209], [930, 162], [1200, 127], [1410, 115], [1602, 115], [1785, 126], [2100, 160], [2450, 233], [2783, 327], [2885, 362]],
    [[480, 495], [700, 430], [850, 400], [1070, 365], [1300, 340], [1420, 334], [1590, 334], [1800, 347], [2180, 395], [2500, 475], [2693, 531]],
    [[285, 547], [480, 483], [700, 427], [900, 390], [1200, 357], [1410, 345], [1590, 346], [1800, 360], [2100, 402], [2500, 500], [2780, 586]],
    [[515, 545], [690, 495], [900, 450], [1200, 405], [1410, 391], [1592, 390], [1800, 405], [2100, 445], [2400, 505], [2672, 583]],
    [[445, 637], [570, 602], [750, 555], [950, 513], [1200, 482], [1410, 474], [1590, 477], [1800, 493], [2150, 545], [2500, 628], [2630, 670]],
    [[470, 690], [650, 637], [850, 585], [1150, 540], [1350, 527], [1500, 525], [1700, 533], [2000, 565], [2300, 625], [2600, 713]],
    [[470, 695], [650, 647], [900, 600], [1150, 572], [1410, 563], [1600, 568], [1900, 600], [2200, 655], [2500, 735], [2680, 797]],
    [[259, 757], [434, 697], [650, 640]],
    [[434, 820], [650, 760], [900, 705], [1150, 675], [1410, 662], [1620, 667], [1900, 690], [2200, 747], [2550, 840]],
    [[458, 862], [700, 800], [950, 740], [1200, 695], [1410, 673], [1600, 671], [1900, 693], [2200, 752], [2550, 850]],
    [[458, 862], [700, 797], [900, 755], [1150, 720], [1410, 709], [1600, 714], [1900, 752], [2200, 803], [2530, 892]],
    [[530, 848], [700, 803], [900, 768], [1200, 742], [1410, 731], [1600, 729], [1900, 755], [2200, 806], [2530, 894]],
    [[596, 930], [750, 885], [1000, 830], [1250, 795], [1410, 787], [1650, 783], [2000, 815], [2300, 875], [2612, 970]],
    [[632, 948], [738, 915], [906, 867], [1100, 825], [1300, 798], [1500, 787], [1627, 790], [1900, 820], [2200, 880], [2490, 955]],
    [[622, 980], [906, 905], [1150, 865], [1350, 847], [1630, 841], [1900, 870], [2200, 925], [2480, 1005]],
    [[583, 1085], [860, 1015], [1100, 972], [1350, 950], [1600, 949], [1900, 980], [2200, 1043], [2435, 1110]],
    [[605, 1132], [860, 1062], [1100, 1020], [1400, 995], [1510, 996], [1700, 1002], [2000, 1045], [2300, 1115], [2525, 1187]],
    [[598, 1162], [860, 1082], [1150, 1025], [1400, 998], [1650, 1000], [1900, 1035], [2200, 1098], [2420, 1153]],
    [[562, 1362], [657, 1328], [816, 1281], [1100, 1225], [1300, 1203], [1500, 1198], [1650, 1205], [1900, 1232], [2150, 1285], [2335, 1348], [2432, 1382]],
]

const GRID =
    "M94 39L2950 94M84 147L2950 202M72 252L2950 306M63 354L2912 405M54 455L2868 503M48 663L2853 707M57 877L2871 915M48 1091L2890 1128M48 1309L2905 1342" +
    "M515 25L449 480M446 575L451 1390M1598 47L1470 498M1462 595L1492 1400M2665 68L2476 515M2467 612L2518 1410"

const EDGES =
    "M415 285L313 317L285 547L259 760L562 1362M313 317L632 948L562 1362M415 285L738 915L657 1328M415 285L353 735L657 1328M285 547L598 1162" +
    "M353 735L259 760" +
    "M101 681Q62 830 70 992L192 1218L485 1120L495 965Q505 900 530 848L406 582L101 681L225 945Q195 1030 192 1218M75 815L197 1062L495 965M75 815L259 755M225 945L530 848M225 945L353 900" +
    "M406 582Q360 700 362 900L485 1120M70 992L362 903" +
    "M480 495Q440 600 434 820L458 862Q460 650 515 545ZM445 637L470 690" +
    "M632 818Q575 950 583 1085L605 1132Q605 980 657 870ZM596 930L622 980L612 1110M657 870L906 800" +
    "M124 915L146 965M124 915Q122 940 146 965Q146 940 124 915" +
    "M1602 115L1470 565L1495 1198L1628 790ZM1590 334Q1490 600 1493 665L1497 710L1592 390ZM1597 672Q1505 870 1510 945L1513 995L1535 900Q1560 800 1597 728Z" +
    "M2783 327L2335 1348M2885 362L2432 1382" +
    "M2783 330L2630 670L2490 955L2335 1348M2693 531L2640 670L2420 1153M2672 583L2435 1110M2632 670L2480 1005" +
    "M2780 586L2525 1187M2780 622L2710 755L2540 1150M2775 610L2665 880L2550 1150" +
    "M2780 622L2950 682M2710 755L2950 838M2665 880L2945 980M2640 932L2917 1030M2612 997L2895 1098M2540 1150L2827 1250L2950 968M2827 1250L2950 1015M2950 980L2900 1098M2827 1250L2917 1030"

const CUT_PLANE = "M362 417L908 868L816 1282L306 855Z"

function GraphicsScene() {
    return (
        <svg viewBox="851 118 1062 832" className="aspect-[1062/832] w-full bg-linear-to-b from-[#7dc6ea] to-[#cdeaf7]" role="img" aria-label="3D view of the cut plane">
            <defs>
                <clipPath id="cut-plane">
                    <path d={CUT_PLANE} />
                </clipPath>
            </defs>
            <g transform="translate(930 160) scale(.33333 .3699)" fill="none" strokeWidth="3">
                <path d={GRID} stroke="#86807f" />
                <path d={CUT_PLANE} fill="#ec3e45" fillOpacity=".72" stroke="#ff1414" strokeDasharray="12 3" />
                <path d={GRID} stroke="#b04048" clipPath="url(#cut-plane)" />
                <g stroke="#16303c" strokeOpacity=".75">
                    {ARCS.map((arc, index) => (
                        <path key={index} d={smooth(arc)} />
                    ))}
                    <path d={EDGES} />
                </g>
                <g stroke="#8a0010" clipPath="url(#cut-plane)">
                    {ARCS.map((arc, index) => (
                        <path key={index} d={smooth(arc)} />
                    ))}
                </g>

                <path d="M532 806L405 706" stroke="#f00000" strokeWidth="12" />
                <path d="M364 668L432 692L402 726Z" fill="#e80000" />
                <path d="M420 700L402 726L398 712Z" fill="#8c0000" />
                <path d="M538 806L655 712" stroke="#7a0068" strokeWidth="12" />
                <path d="M698 674L632 702L662 730Z" fill="#80007c" />
                <path d="M698 674L682 680L690 688Z" fill="#1c14e0" />
                <path d="M532 812L538 760" stroke="#00e810" strokeWidth="12" />
                <circle cx="554" cy="747" r="13" fill="#8a7a10" />
                <path d="M545 721L520 745Q524 764 540 766Q556 764 560 745Z" fill="#00f010" />
            </g>

            <g fontFamily="DejaVu Sans, sans-serif" fontSize="12" textAnchor="middle">
                <text x="1080" y="704">-200</text>
                <text x="1428" y="708">0</text>
                <text x="1771" y="711">200</text>
                <text x="891" y="878">x</text>
                <text x="929" y="912">z</text>
            </g>

            <path d="M892 908V886" stroke="#f00" strokeWidth="1.500" />
            <path d="M892 881l3 9h-6z" fill="#e00000" />
            <path d="M893 908l2-8" stroke="#0e0" strokeWidth="2" />
            <circle cx="895" cy="899" r="3" fill="#00e818" />
            <path d="M893 908h22" stroke="#0000f0" strokeWidth="1.500" />
            <path d="M923 908l-9 3v-6z" fill="#0000e0" />
            <text x="897" y="895" fontFamily="DejaVu Sans, sans-serif" fontSize="12" textAnchor="middle">y</text>

            <g fill="#fff" fillOpacity=".6" fontFamily="DejaVu Sans, sans-serif" textAnchor="end">
                <text x="1868" y="139" fontSize="11">C<tspan fontSize="10">OMSOL</tspan></text>
                <text x="1868" y="149" fontSize="11">M<tspan fontSize="10">ULTIPHYSICS</tspan></text>
            </g>
            <path d="M1874 134l14-3 6 4-2 12-8 2-8-4z" fill="#d8eff9" fillOpacity=".8" />
            <path d="M1876 135l6 2 1 11-6-3z" fill="#8cc8e8" />
            <circle cx="1887" cy="141" r="4" fill="#3d9bd0" />
            <circle cx="1886" cy="141" r="2" fill="#bfe6f7" />
        </svg>
    )
}

function Separator() {
    return <span className="mx-[2px] h-[18px] w-px bg-[#8a8a8a]" />
}

function GraphicsPanel() {
    const toggle = "flex h-5 w-[22px] items-center justify-center rounded-[3px] border-2 border-[#5c5c5c] bg-[#e2e2e2]"
    return (
        <Panel
            tabs={[
                { label: "Graphics", icon: "graphics", width: "w-[62px]" },
                { label: "Convergence Plot 1", icon: "graphics", width: "-ml-[7px] w-[126px]" },
                { label: "Convergence Plot 2", icon: "graphics", width: "w-[130px] pl-[5px]" },
            ]}
            toolbar={
                <>
                    <ToolButton label="Zoom in"><Icon name="zoomIn" /></ToolButton>
                    <ToolButton label="Zoom out"><Icon name="zoomOut" /></ToolButton>
                    <ToolButton label="Zoom box"><Icon name="zoomBox" /></ToolButton>
                    <ToolButton label="Zoom extents"><Icon name="extents" /></ToolButton>
                    <Separator />
                    <ToolButton label="Default view" className="ml-1 w-[23px]"><Icon name="axes" /></ToolButton>
                    <ToolButton label="Views" className="w-[13px]"><Caret /></ToolButton>
                    <ToolButton label="xy view"><PlaneIcon label="xy" up="#18b818" right="#e0481c" /></ToolButton>
                    <ToolButton label="yz view"><PlaneIcon label="yz" up="#1b74e4" right="#18b818" /></ToolButton>
                    <ToolButton label="zx view"><PlaneIcon label="zx" up="#e0481c" right="#1b74e4" /></ToolButton>
                    <Separator />
                    <button type="button" aria-label="Scene light" aria-pressed="true" className={`${toggle} ml-1`}>
                        <Icon name="light" />
                    </button>
                    <button type="button" aria-label="Transparency" aria-pressed="true" className={`${toggle} ml-px`}>
                        <Icon name="transparency" />
                    </button>
                    <Separator />
                    <ToolButton label="Image snapshot" className="ml-1 w-5"><Icon name="camera" /></ToolButton>
                </>
            }
        >
            <GraphicsScene />
        </Panel>
    )
}

const MESSAGES = [
    "Number of degrees of freedom solved for: 30.",
    "Opened file: deflector.class",
    "Number of degrees of freedom solved for: 12424.",
    "Number of degrees of freedom solved for: 30.",
    "Opened file: deflector.class",
    "Number of degrees of freedom solved for: 12424.",
    "Number of degrees of freedom solved for: 30.",
    "Opened file: deflector.class",
]

function MessagesPanel() {
    return (
        <Panel
            tabs={[
                { label: "Messages", icon: "envelope", width: "w-[92px]", closable: true },
                { label: "Progress", icon: "progress", width: "-ml-[11px] w-[69px]" },
                { label: "Log", icon: "log", width: "w-12 pl-1" },
                { label: "Table", icon: "tables", width: "w-[57px] pl-1" },
            ]}
            toolbar={
                <ToolButton label="Clear">
                    <Icon name="broom" />
                </ToolButton>
            }
        >
            <div className="flex">
                <div className="flex h-[115px] flex-1 flex-col justify-end overflow-hidden">
                    {MESSAGES.map((message, index) => (
                        <p key={index} className="h-[15px] shrink-0 leading-[15px]">{message}</p>
                    ))}
                </div>
                <div className="flex w-4 flex-col items-center bg-[#efefef] pt-[7px] pb-[6px]">
                    <svg viewBox="0 0 8 4" className="h-1 w-2" aria-hidden="true"><path d="M0 4h8L4 0z" fill="#444" /></svg>
                    <span className="mt-auto mb-[9px] h-[15px] w-[15px] rounded-[2px] border border-[#979797] bg-linear-to-r from-[#f5f5f5] to-[#cdcdd0]" />
                    <Caret />
                </div>
            </div>
            <div className="flex h-4 items-center justify-between bg-[#ebebeb] pr-6 pl-[6px]">
                <svg viewBox="0 0 4 8" className="h-2 w-1" aria-hidden="true"><path d="M4 0v8L0 4z" fill="#777" /></svg>
                <svg viewBox="0 0 4 8" className="h-2 w-1" aria-hidden="true"><path d="M0 0v8l4-4z" fill="#777" /></svg>
            </div>
        </Panel>
    )
}

function TitleBar() {
    const winButton = "flex h-[17px] w-[31px] items-center justify-center rounded-b-[3px] border"
    return (
        <header className="flex h-[22px] items-center border-t border-[#3a3f47] bg-linear-to-b from-[#98b4d3] to-[#b9d1ea] pl-[2px]">
            <Icon name="app" />
            <h1 className="pl-2 font-['Open_Sans',sans-serif] text-[12px]">Untitled.mph - COMSOL Multiphysics</h1>
            <div className="ml-auto flex gap-[2px] pr-[2px]">
                <button type="button" aria-label="Minimize window" className={`${winButton} border-[#5f7086] bg-linear-to-b from-[#c3d5ea] to-[#a4bcd8]`}>
                    <span className="mt-1 h-[5px] w-[11px] rounded-[1px] border border-[#535666] bg-white" />
                </button>
                <button type="button" aria-label="Restore window" className={`${winButton} border-[#5f7086] bg-linear-to-b from-[#c3d5ea] to-[#a4bcd8]`}>
                    <svg viewBox="0 0 12 12" className="size-3" aria-hidden="true">
                        <path d="M4.500 1.500h7v6h-7z" fill="#fff" stroke="#535666" />
                        <path d="M.5 4.500h7v7h-7z" fill="#fff" stroke="#535666" />
                        <path d="M3 7.500h2v1.500H3z" fill="none" stroke="#535666" />
                    </svg>
                </button>
                <button type="button" aria-label="Close window" className={`${winButton} border-[#5a1420] bg-linear-to-b from-[#dd9c8c] via-[#c4432c] to-[#d27a60]`}>
                    <svg viewBox="0 0 12 10" className="h-[10px] w-3" aria-hidden="true">
                        <path d="M1 .5h3l2 2 2-2h3L8 5l3 4.500H8l-2-2-2 2H1L4 5z" fill="#fff" stroke="#535666" />
                    </svg>
                </button>
            </div>
        </header>
    )
}

function Grip({ className }: { className: string }) {
    return <span className={`h-5 border-l-2 border-dotted border-[#b5b5b5] ${className}`} />
}

function TopBars() {
    return (
        <>
            <nav className="flex h-[19px] items-center gap-[14px] border-b border-[#b9c0d6] bg-linear-to-b from-white via-[#dde3f2] to-[#e0e5f5] pt-[2px] pl-[7px] font-['Open_Sans',sans-serif] text-[12px]">
                {["File", "Edit", "View", "Options", "Help"].map((item) => (
                    <button key={item} type="button">{item}</button>
                ))}
            </nav>
            <div className="flex h-[27px] items-center" role="toolbar">
                <Grip className="ml-[6px]" />
                <ToolButton label="New" className="ml-1 w-[23px]"><Icon name="newFile" /></ToolButton>
                <ToolButton label="Open"><Icon name="open" /></ToolButton>
                <ToolButton label="Save"><Icon name="save" /></ToolButton>
                <ToolButton label="Print"><Icon name="print" /></ToolButton>
                <ToolButton label="Undo" className="ml-2 w-[23px]"><Icon name="undo" /></ToolButton>
                <ToolButton label="Redo"><Icon name="redo" /></ToolButton>
                <ToolButton label="Refresh" className="ml-2 w-[23px]"><Icon name="refresh" /></ToolButton>
                <ToolButton label="Help" className="ml-2 w-[23px]"><Icon name="help" /></ToolButton>
                <ToolButton label="Documentation"><Icon name="docs" /></ToolButton>
                <Grip className="ml-2" />
                <ToolButton label="Clear" className="ml-[6px] w-[23px]"><Icon name="brush" /></ToolButton>
                <ToolButton label="More" className="w-3"><Caret /></ToolButton>
            </div>
        </>
    )
}

function StatusBar() {
    return (
        <footer className="flex h-[30px] justify-end pt-[2px] pr-[210px] pb-[2px]">
            <div className="flex w-[149px] items-center border-x border-[#999] pl-[7px]">727 MB | 838 MB</div>
        </footer>
    )
}

function Taskbar() {
    const tray: IconName[] = ["sync", "bell", "shield", "update", "three", "tray", "flag", "network", "volume"]
    const task = "flex h-[29px] w-11 items-center justify-center rounded-[3px] border border-[#3f4f63]"
    return (
        <nav className="relative flex h-[30px] items-center border-t border-[#3d4a58] bg-[#a7bfdc]">
            <span className="h-full w-[45px] bg-linear-to-r from-[#8093ac] to-[#8698b0]" />
            <span className="h-full w-[14px] bg-linear-to-r from-[#8698b0] to-[#a7bfdc]" />
            <button type="button" aria-label="Start" className="absolute -top-[6px] left-[9px] h-[35px] w-9 overflow-hidden">
                <svg viewBox="0 0 36 35" className="h-[35px] w-9" aria-hidden="true">
                    <defs>
                        <radialGradient id="orb" cx=".5" cy=".95" r=".8">
                            <stop offset="0" stopColor="#14d4f8" />
                            <stop offset=".5" stopColor="#1c6ea4" />
                            <stop offset="1" stopColor="#5d7d9c" />
                        </radialGradient>
                    </defs>
                    <circle cx="18" cy="18" r="17.500" fill="url(#orb)" stroke="#1e4c72" />
                    <path d="M3 13Q8 3 18 3t15 10q-15-5-30 0z" fill="#fff" fillOpacity=".3" />
                    <path d="M11 9q4-3 8-1l-2 8q-4-2-8 1z" fill="#e8582a" />
                    <path d="M21 9q4 2 9 0l-2 8q-5 2-9 0z" fill="#8cc63f" />
                    <path d="M9 19q4-3 8-1l-2 8q-4-2-8 0z" fill="#4aa8e8" />
                    <path d="M18 19q4 2 9 0l-2 9q-4 2-9-1z" fill="#fbc02d" />
                </svg>
            </button>
            <button type="button" aria-label="Explorer" className={`${task} bg-linear-to-br from-[#d3deec] to-[#a4bbd8]`}>
                <Icon name="explorer" />
            </button>
            <button type="button" aria-label="Chrome" className="flex w-12 justify-center"><Icon name="chrome" className="size-[15px]" /></button>
            <button type="button" aria-label="Calculator" className="flex w-[46px] justify-center"><Icon name="calculator" /></button>
            <button type="button" aria-label="COMSOL" className={`${task} bg-linear-to-br from-[#f2f6fb] to-[#ccd9ea]`}>
                <Icon name="app" />
            </button>

            <span className="ml-auto h-full w-[30px] bg-linear-to-r from-[#a7bfdc] to-[#8093ab]" />
            <div className="flex h-full items-center bg-[#8294ab] pl-[10px] text-white">
                <span className="w-[30px] pb-2 text-[#e4ebf3]">EN</span>
                <span className="flex gap-2">
                    {tray.map((name) => (
                        <Icon key={name} name={name} />
                    ))}
                </span>
                <time className="w-[87px] pl-[33px]">15:30</time>
            </div>
            <button type="button" aria-label="Show desktop" className="h-full w-[15px] border border-[#4a5868] bg-linear-to-br from-[#8797a8] to-[#57677b]" />
        </nav>
    )
}

export default function App() {
    return (
        <div className={`min-h-screen bg-white text-[11px] text-black ${UI_FONT}`}>
            <div className="bg-[#efefef]">
                <TitleBar />
                <TopBars />
                <main className="flex gap-[3px] px-1">
                    <ModelBuilder />
                    <CutPlaneSettings />
                    <div className="flex min-w-0 flex-1 flex-col gap-[3px]">
                        <GraphicsPanel />
                        <MessagesPanel />
                    </div>
                </main>
                <StatusBar />
                <Taskbar />
            </div>
        </div>
    )
}
